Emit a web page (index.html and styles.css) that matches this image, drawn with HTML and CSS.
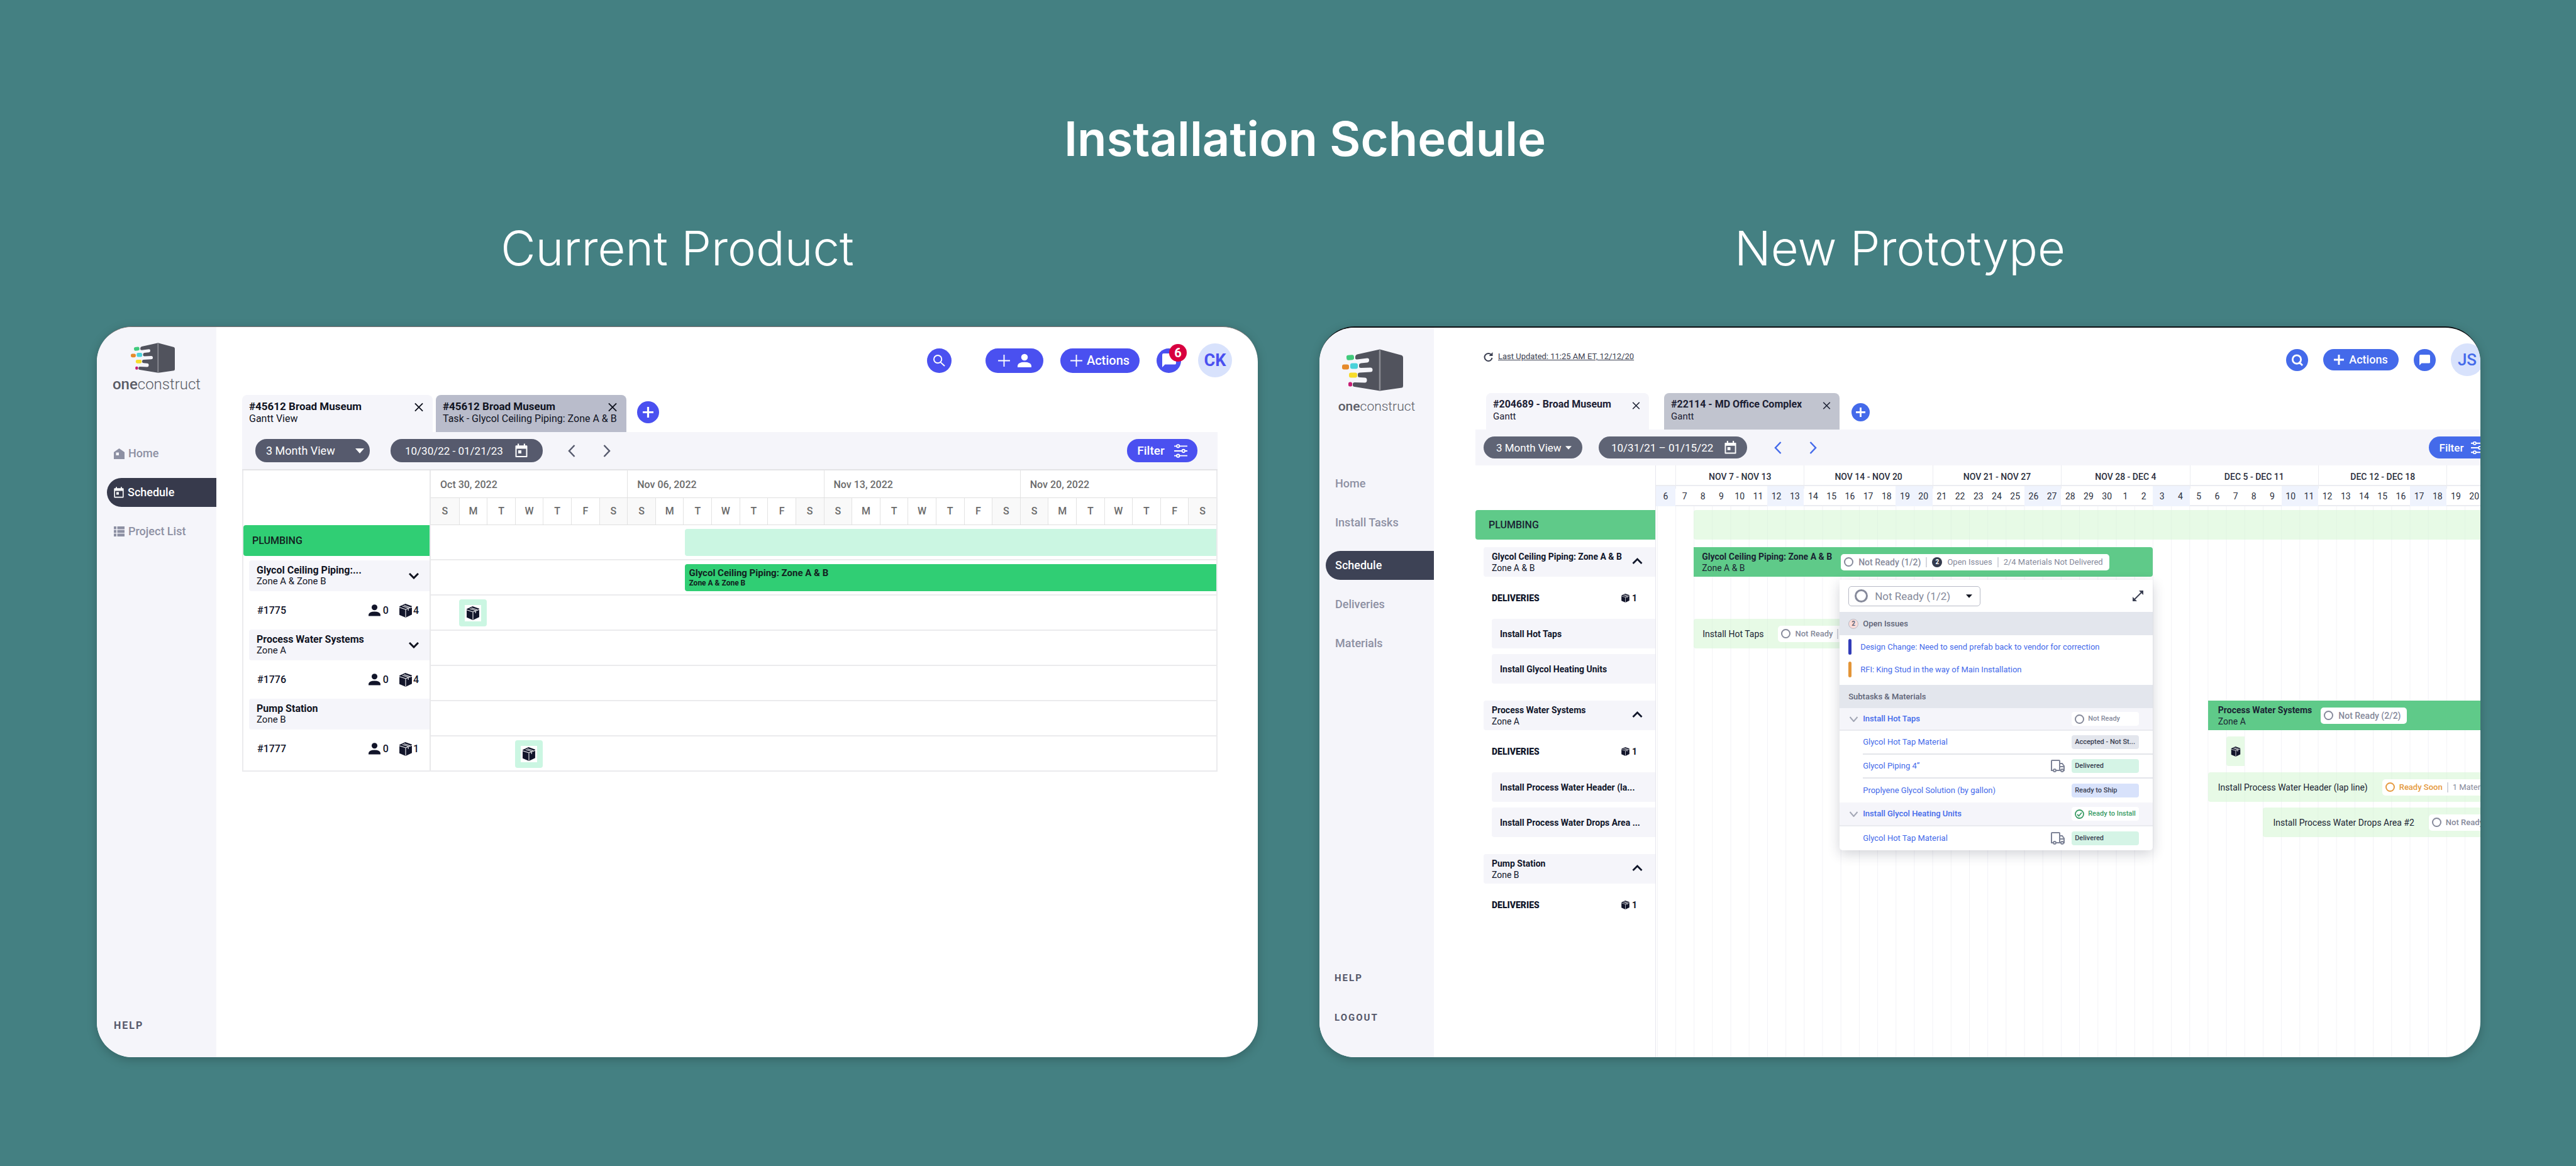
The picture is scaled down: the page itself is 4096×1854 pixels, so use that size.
FILE: index.html
```html
<!DOCTYPE html>
<html lang="en">
<head>
<meta charset="utf-8">
<title>Installation Schedule</title>
<link rel="stylesheet" href="styles.css">
</head>
<body>
<svg class="sprite" aria-hidden="true">
  <symbol id="logo" viewBox="0 0 97 66">
    <path fill="#51535d" d="M60 0 24 8Q21 9 21 12V14Q21 16 24 16L40 14Q43 14 43 17 43 20.500 40 21L30 22Q27 22.500 27 25V27Q27 29.500 30 29.500L45 29Q48.500 29 48.500 32.500 48.500 36 45 36L28 37Q25 37 25 40V42Q25 44.500 28 44.500L36 45Q39.500 45 39.500 49 39.500 53 36 53L20 52.500Q17 52.500 17 55V57Q17 59 20 59.500L60 66 95 61Q97 60.500 97 58V13Q97 10.500 95 9.500Z"/>
    <path stroke="#8b8c93" stroke-width="2.500" d="M60 1V65"/>
    <rect x="7" y="9" width="12" height="8" rx="3" fill="#41ca7c" transform="rotate(-6 13 13)"/>
    <rect x="0" y="24" width="11" height="8" rx="3" fill="#e58a2c"/>
    <rect x="13" y="22" width="12" height="9" rx="3" fill="#4bd2da"/>
    <rect x="11" y="37" width="13" height="8" rx="3" fill="#f7dc2b"/>
    <rect x="10" y="52" width="6" height="7" rx="2.500" fill="#c81c74"/>
  </symbol>
  <symbol id="box" viewBox="0 0 21 21">
    <path fill="#12152a" d="M10 0 20 3.500V16.500L10.500 21 1 17V4Z"/>
    <path fill="none" stroke="#fff" stroke-width="1" d="M1 5.500 10.500 8.500 20 5M10.500 8.500V20.500M5.500 3.500 14.500 6.500V10.500M8 2.500 17 5.500"/>
  </symbol>
  <symbol id="person" viewBox="0 0 20 20">
    <circle cx="10" cy="5" r="4.800"/><path d="M0 19.500V17Q1 12 10 12T20 17V19.500Z"/>
  </symbol>
  <symbol id="calendar" viewBox="0 0 20 22">
    <path fill="none" stroke="currentColor" stroke-width="2" d="M1.500 4H18.500V20.500H1.500Z" stroke-linejoin="round"/>
    <path fill="currentColor" d="M1 3H19V8H1ZM4 0H6.200V4H4ZM13.800 0H16V4H13.800ZM5 10.500H10V15.500H5Z"/>
  </symbol>
  <symbol id="cross" viewBox="0 0 16 16"><path fill="none" stroke="currentColor" stroke-width="2" d="M1.500 1.500 14.500 14.500M14.500 1.500 1.500 14.500"/></symbol>
  <symbol id="plus" viewBox="0 0 20 20"><path fill="none" stroke="currentColor" stroke-width="2" d="M10 0V20M0 10H20"/></symbol>
  <symbol id="plus-bold" viewBox="0 0 16 16"><path fill="none" stroke="currentColor" stroke-width="3" d="M8 0V16M0 8H16"/></symbol>
  <symbol id="search" viewBox="0 0 20 20"><path fill="none" stroke="currentColor" stroke-width="2" d="M14 7.500A6.500 6.500 0 1 1 1 7.500A6.500 6.500 0 1 1 14 7.500ZM12 12.500 19 19"/></symbol>
  <symbol id="search-bold" viewBox="0 0 20 20"><path fill="none" stroke="currentColor" stroke-width="3" d="M16.500 9A7 7 0 1 1 2.500 9A7 7 0 1 1 16.500 9ZM13 13 19 19"/></symbol>
  <symbol id="chat" viewBox="0 0 20 20"><path fill="currentColor" d="M2 0H18Q20 0 20 2V14Q20 16 18 16H4L0 20V2Q0 0 2 0Z"/></symbol>
  <symbol id="sliders" viewBox="0 0 22 22"><g fill="none" stroke="currentColor" stroke-width="2"><path d="M0 3H4M9 3H22M0 11H13M18 11H22M0 19H4M9 19H22"/><circle cx="6.500" cy="3" r="2.300"/><circle cx="15.500" cy="11" r="2.300"/><circle cx="6.500" cy="19" r="2.300"/></g></symbol>
  <symbol id="caret" viewBox="0 0 14 8"><path fill="currentColor" d="M0 0H14L7 8Z"/></symbol>
  <symbol id="prev" viewBox="0 0 12 20"><path fill="none" stroke="currentColor" stroke-width="2.500" d="M10.500 1 2 10 10.500 19"/></symbol>
  <symbol id="next" viewBox="0 0 12 20"><path fill="none" stroke="currentColor" stroke-width="2.500" d="M1.500 1 10 10 1.500 19"/></symbol>
  <symbol id="down" viewBox="0 0 16 10"><path fill="none" stroke="currentColor" stroke-width="3" d="M1 1 8 8 15 1"/></symbol>
  <symbol id="up" viewBox="0 0 16 10"><path fill="none" stroke="currentColor" stroke-width="2.800" d="M1 9 8 2 15 9"/></symbol>
  <symbol id="truck" viewBox="0 0 22 20"><g fill="none" stroke="#7e8497" stroke-width="2"><path d="M4 17H1V2Q1 1 2 1H13Q14 1 14 2V17H8M14 6H18L21 10V17H20M16 17H14M15 11H21"/><circle cx="6" cy="17" r="2"/><circle cx="18" cy="17" r="2"/></g></symbol>
</svg>

<header class="titles">
  <h1>Installation Schedule</h1>
</header>

<main class="compare">
<section class="side">
  <h2>Current Product</h2>
  <div class="app current">
    <aside class="sidebar">
      <div class="brand"><svg class="brand-mark"><use href="#logo"/></svg><span class="brand-name"><b>one</b>construct</span></div>
      <nav class="nav">
        <a href="#home"><svg width="17" height="17" viewBox="0 0 17 17"><path fill="currentColor" fill-rule="evenodd" d="M0 6 8.500 0 17 6V17H0ZM3.500 6.500V11H8V6.500Z"/></svg>Home</a>
        <a href="#schedule" class="active"><svg width="16" height="18"><use href="#calendar"/></svg>Schedule</a>
        <a href="#projects"><svg width="17" height="16" viewBox="0 0 17 16"><path fill="currentColor" d="M0 0H4V4.500H0ZM5.500 0H17V4.500H5.500ZM0 5.800H4V10.200H0ZM5.500 5.800H17V10.200H5.500ZM0 11.500H4V16H0ZM5.500 11.500H17V16H5.500Z"/></svg>Project List</a>
      </nav>
      <div class="foot"><a href="#help">HELP</a></div>
    </aside>
    <div class="work">
      <div class="topbar">
        <button class="round gap-after" aria-label="Search"><svg width="19" height="19"><use href="#search"/></svg></button>
        <button class="btn user" aria-label="Add user"><svg width="19" height="19"><use href="#plus"/></svg><svg width="22" height="23" fill="#fff"><use href="#person"/></svg></button>
        <button class="btn actions"><svg width="19" height="19"><use href="#plus"/></svg>Actions</button>
        <button class="round msg" aria-label="Messages"><svg width="22" height="22"><use href="#chat"/></svg><span class="count">6</span></button>
        <button class="avatar">CK</button>
      </div>
      <div class="content">
        <div class="tabs">
          <div class="tab"><div><strong>#45612 Broad Museum</strong><span>Gantt View</span></div><button aria-label="Close tab"><svg width="16" height="15"><use href="#cross"/></svg></button></div>
          <div class="tab alt"><div><strong>#45612 Broad Museum</strong><span>Task - Glycol Ceiling Piping: Zone A &amp; B</span></div><button aria-label="Close tab"><svg width="16" height="15"><use href="#cross"/></svg></button></div>
          <button class="add" aria-label="Add tab"><svg width="17" height="17"><use href="#plus-bold"/></svg></button>
        </div>
        <div class="toolbar">
          <label class="pill range"><select aria-label="Range"><option>3 Month View</option></select><svg width="14" height="8"><use href="#caret"/></svg></label>
          <button class="pill dates">10/30/22 - 01/21/23<svg width="20" height="23"><use href="#calendar"/></svg></button>
          <button class="step" aria-label="Previous"><svg width="12" height="20"><use href="#prev"/></svg></button>
          <button class="step" aria-label="Next"><svg width="12" height="20"><use href="#next"/></svg></button>
          <button class="btn filter">Filter<svg width="21" height="22"><use href="#sliders"/></svg></button>
        </div>
        <div class="gantt">
          <div class="labels">
            <div class="row trade">PLUMBING</div>
            <div class="row task"><div><strong>Glycol Ceiling Piping:...</strong><span>Zone A &amp; Zone B</span></div><svg width="16" height="10"><use href="#down"/></svg></div>
            <div class="row order"><strong>#1775</strong><span class="num"><svg width="19" height="19"><use href="#person"/></svg>0</span><span class="num tight"><svg width="22" height="22"><use href="#box"/></svg>4</span></div>
            <div class="row task"><div><strong>Process Water Systems</strong><span>Zone A</span></div><svg width="16" height="10"><use href="#down"/></svg></div>
            <div class="row order"><strong>#1776</strong><span class="num"><svg width="19" height="19"><use href="#person"/></svg>0</span><span class="num tight"><svg width="22" height="22"><use href="#box"/></svg>4</span></div>
            <div class="row task"><div><strong>Pump Station</strong><span>Zone B</span></div></div>
            <div class="row order"><strong>#1777</strong><span class="num"><svg width="19" height="19"><use href="#person"/></svg>0</span><span class="num tight"><svg width="22" height="22"><use href="#box"/></svg>1</span></div>
          </div>
          <div class="chart">
            <div class="weeks"><span>Oct 30, 2022</span><span>Nov 06, 2022</span><span>Nov 13, 2022</span><span>Nov 20, 2022</span></div>
            <div class="days"><i>S</i><i>M</i><i>T</i><i>W</i><i>T</i><i>F</i><i>S</i><i>S</i><i>M</i><i>T</i><i>W</i><i>T</i><i>F</i><i>S</i><i>S</i><i>M</i><i>T</i><i>W</i><i>T</i><i>F</i><i>S</i><i>S</i><i>M</i><i>T</i><i>W</i><i>T</i><i>F</i><i>S</i></div>
            <div class="line"><div class="bar pale from-10"></div></div>
            <div class="line"><div class="bar solid from-10"><strong>Glycol Ceiling Piping: Zone A &amp; B</strong><span>Zone A &amp; Zone B</span></div></div>
            <div class="line"><div class="drop at-2"><svg width="26" height="26"><use href="#box"/></svg></div></div>
            <div class="line"></div>
            <div class="line"></div>
            <div class="line"></div>
            <div class="line"><div class="drop at-4"><svg width="26" height="26"><use href="#box"/></svg></div></div>
          </div>
        </div>
      </div>
    </div>
  </div>
</section>

<section class="side">
  <h2>New Prototype</h2>
  <div class="app proto">
    <aside class="sidebar">
      <div class="brand"><svg class="brand-mark"><use href="#logo"/></svg><span class="brand-name"><b>one</b>construct</span></div>
      <nav class="nav">
        <a href="#home">Home</a>
        <a href="#install">Install Tasks</a>
        <a href="#schedule" class="active">Schedule</a>
        <a href="#deliveries">Deliveries</a>
        <a href="#materials">Materials</a>
      </nav>
      <div class="foot"><a href="#help">HELP</a><a href="#logout">LOGOUT</a></div>
    </aside>
    <div class="work">
      <div class="topbar">
        <a class="updated" href="#refresh"><svg width="15" height="15" viewBox="0 0 15 15"><path fill="none" stroke="currentColor" stroke-width="2" d="M12.500 4.500A6 6 0 1 0 13.500 9"/><path fill="currentColor" d="M14.500 0V6H8.500Z"/></svg><span>Last Updated: 11:25 AM ET, 12/12/20</span></a>
        <button class="round" aria-label="Search"><svg width="19" height="19"><use href="#search-bold"/></svg></button>
        <button class="btn actions"><svg width="16" height="16"><use href="#plus-bold"/></svg>Actions</button>
        <button class="round" aria-label="Messages"><svg width="17" height="17"><use href="#chat"/></svg></button>
        <button class="avatar">JS</button>
      </div>
      <div class="content">
        <div class="tabs">
          <div class="tab"><div><strong>#204689 - Broad Museum</strong><span>Gantt</span></div><button aria-label="Close tab"><svg width="13" height="14"><use href="#cross"/></svg></button></div>
          <div class="tab alt"><div><strong>#22114 - MD Office Complex</strong><span>Gantt</span></div><button aria-label="Close tab"><svg width="13" height="14"><use href="#cross"/></svg></button></div>
          <button class="add" aria-label="Add tab"><svg width="15" height="15"><use href="#plus-bold"/></svg></button>
        </div>
        <div class="toolbar">
          <label class="pill range"><select aria-label="Range"><option>3 Month View</option></select><svg width="10" height="6"><use href="#caret"/></svg></label>
          <button class="pill dates">10/31/21 – 01/15/22<svg width="19" height="21"><use href="#calendar"/></svg></button>
          <button class="step" aria-label="Previous"><svg width="12" height="20"><use href="#prev"/></svg></button>
          <button class="step" aria-label="Next"><svg width="12" height="20"><use href="#next"/></svg></button>
          <button class="btn filter">Filter<svg width="20" height="20"><use href="#sliders"/></svg></button>
        </div>
        <div class="gantt">
          <div class="labels">
            <div class="lane trade">PLUMBING</div>
            <div class="group">
              <div class="lane task"><div><strong>Glycol Ceiling Piping: Zone A &amp; B</strong><span>Zone A &amp; B</span></div><svg width="17" height="10"><use href="#up"/></svg></div>
              <div class="lane tall"><strong>DELIVERIES</strong><span class="num"><svg width="15" height="14"><use href="#box"/></svg>1</span></div>
              <div class="lane sub">Install Hot Taps</div>
              <div class="lane sub">Install Glycol Heating Units</div>
            </div>
            <div class="group">
              <div class="lane task"><div><strong>Process Water Systems</strong><span>Zone A</span></div><svg width="17" height="10"><use href="#up"/></svg></div>
              <div class="lane tall"><strong>DELIVERIES</strong><span class="num"><svg width="15" height="14"><use href="#box"/></svg>1</span></div>
              <div class="lane sub">Install Process Water Header (la...</div>
              <div class="lane sub">Install Process Water Drops Area ...</div>
            </div>
            <div class="group">
              <div class="lane task"><div><strong>Pump Station</strong><span>Zone B</span></div><svg width="17" height="10"><use href="#up"/></svg></div>
              <div class="lane tall"><strong>DELIVERIES</strong><span class="num"><svg width="15" height="14"><use href="#box"/></svg>1</span></div>
            </div>
          </div>
          <div class="chart">
            <div class="weeks track"><span class="w0"></span><span>NOV 7 - NOV 13</span><span>NOV 14 - NOV 20</span><span>NOV 21 - NOV 27</span><span>NOV 28 - DEC 4</span><span>DEC 5 - DEC 11</span><span>DEC 12 - DEC 18</span><span class="w3"></span></div>
            <div class="days track"><i>6</i><i>7</i><i>8</i><i>9</i><i>10</i><i>11</i><i>12</i><i>13</i><i>14</i><i>15</i><i>16</i><i>17</i><i>18</i><i>19</i><i>20</i><i>21</i><i>22</i><i>23</i><i>24</i><i>25</i><i>26</i><i>27</i><i>28</i><i>29</i><i>30</i><i>1</i><i>2</i><i>3</i><i>4</i><i>5</i><i>6</i><i>7</i><i>8</i><i>9</i><i>10</i><i>11</i><i>12</i><i>13</i><i>14</i><i>15</i><i>16</i><i>17</i><i>18</i><i>19</i><i>20</i></div>
            <div class="lanes">
              <div class="lane track"><div class="bar pale all"></div></div>
              <div class="group">
                <div class="lane track"><div class="bar solid glycol">
                  <div class="name"><strong>Glycol Ceiling Piping: Zone A &amp; B</strong><span>Zone A &amp; B</span></div>
                  <div class="chip"><span class="ring"></span><b class="big">Not Ready (1/2)</b><hr><span class="two">2</span>Open Issues<hr>2/4 Materials Not Delivered</div>
                  <div class="popover">
                    <div class="pop-head"><label class="status"><span class="ring"></span><select aria-label="Status"><option>Not Ready (1/2)</option></select><svg width="10" height="6"><use href="#caret"/></svg></label><button aria-label="Expand"><svg width="17" height="17" viewBox="0 0 17 17"><path stroke="#3a3f52" stroke-width="1.800" d="M3 14 14 3"/><path fill="#3a3f52" d="M17 0V7L10 0ZM0 17V10L7 17Z"/></svg></button></div>
                    <h3><span class="two">2</span>Open Issues</h3>
                    <ul class="issues">
                      <li class="blue"><a href="#i1">Design Change: Need to send prefab back to vendor for correction</a></li>
                      <li class="orange"><a href="#i2">RFI: King Stud in the way of Main Installation</a></li>
                    </ul>
                    <h3>Subtasks &amp; Materials</h3>
                    <ul class="parts">
                      <li class="parent"><svg width="13" height="9" viewBox="0 0 13 9"><path fill="none" stroke="#a3a7b5" stroke-width="2" d="M.500 1 6.500 8 12.500 1"/></svg><a href="#p1"><b>Install Hot Taps</b></a><span class="state plain"><span class="ring"></span>Not Ready</span></li>
                      <li><a href="#p2">Glycol Hot Tap Material</a><span class="state grey">Accepted - Not St...</span></li>
                      <li><a href="#p3">Glycol Piping 4”</a><svg width="22" height="20"><use href="#truck"/></svg><span class="state mint">Delivered</span></li>
                      <li class="last"><a href="#p4">Proplyene Glycol Solution (by gallon)</a><span class="state sky">Ready to Ship</span></li>
                      <li class="parent"><svg width="13" height="9" viewBox="0 0 13 9"><path fill="none" stroke="#a3a7b5" stroke-width="2" d="M.500 1 6.500 8 12.500 1"/></svg><a href="#p5"><b>Install Glycol Heating Units</b></a><span class="state plain ok"><svg width="15" height="15" viewBox="0 0 15 15"><g fill="none" stroke="#3a9c66" stroke-width="1.800"><circle cx="7.500" cy="7.500" r="6.500"/><path d="M4 8 6.500 10.500 11 5"/></g></svg>Ready to Install</span></li>
                      <li class="last"><a href="#p6">Glycol Hot Tap Material</a><svg width="22" height="20"><use href="#truck"/></svg><span class="state mint">Delivered</span></li>
                    </ul>
                  </div>
                </div></div>
                <div class="lane tall"></div>
                <div class="lane track"><div class="bar pale taps">Install Hot Taps<div class="chip"><span class="ring"></span><b>Not Ready</b><hr>2 Materials</div></div></div>
                <div class="lane sub"></div>
              </div>
              <div class="group">
                <div class="lane track"><div class="bar solid process">
                  <div class="name"><strong>Process Water Systems</strong><span>Zone A</span></div>
                  <div class="chip"><span class="ring"></span><b class="big">Not Ready (2/2)</b></div>
                </div></div>
                <div class="lane tall track"><div class="bar pale parcel"><svg width="16" height="16"><use href="#box"/></svg></div></div>
                <div class="lane track"><div class="bar pale header-task">Install Process Water Header (lap line)<div class="chip soon"><span class="ring"></span><b>Ready Soon</b><hr>1 Materials</div></div></div>
                <div class="lane sub track"><div class="bar pale drops">Install Process Water Drops Area #2<div class="chip"><span class="ring"></span><b>Not Ready</b></div></div></div>
              </div>
            </div>
          </div>
        </div>
      </div>
    </div>
  </div>
</section>
</main>
</body>
</html>
```
FILE: styles.css
```css
* { box-sizing: border-box; }
body {
  margin: 0;
  min-height: 100vh;
  display: flex;
  flex-direction: column;
  background: #448082;
  color: #10131f;
  font: 400 16px/20px Roboto, "Liberation Sans", sans-serif;
}
button, select { font: inherit; color: inherit; border: 0; background: none; padding: 0; margin: 0; }
a { color: inherit; text-decoration: none; }
svg { flex: none; display: block; }
i { font-style: normal; }
h1, h2, h3, ul { margin: 0; padding: 0; }
ul { list-style: none; }
hr { align-self: stretch; width: 2px; margin: 5px 0; border: 0; background: #d5d7de; }
.sprite { position: absolute; width: 0; height: 0; }

.titles { padding: 174px 0 82px 54px; }
h1, h2 { color: #fff; text-align: center; font-family: Inter, "Open Sans", sans-serif; }
h1 { font-size: 76px; line-height: 92px; font-weight: 600; }
h2 { font-size: 76px; line-height: 92px; font-weight: 300; margin-bottom: 79px; }
.compare { flex: 1; display: grid; grid-template-columns: 1fr 1fr; gap: 98px; padding: 0 152px 173px 154px; }
.side { display: flex; flex-direction: column; min-width: 0; }

/* App frame */
.app {
  flex: 1;
  display: flex;
  overflow: hidden;
  border-radius: 56px;
  background: #fff;
  box-shadow: 0 4px 16px rgba(0, 0, 0, .22);
}
.current { border-top: 1px solid #7c6f6f; --accent: #4a50f0; }
.proto { border-top: 2px solid #0c0f12; --accent: #446aea; }
.sidebar { flex: none; display: flex; flex-direction: column; background: #f5f5fa; }
.current .sidebar { width: 190px; padding-top: 25px; }
.proto .sidebar { width: 182px; padding-top: 34px; }
.brand { display: flex; flex-direction: column; align-items: center; color: #5a5c66; }
.brand-name { font-weight: 300; }
.brand-name b { font-weight: 500; }
.current .brand-mark { width: 70px; height: 48px; margin-right: 13px; }
.current .brand-name { font-size: 24px; line-height: 28px; margin-top: 4px; }
.proto .brand-mark { width: 97px; height: 67px; margin-right: 14px; }
.proto .brand-name { font-size: 21px; line-height: 24px; margin-top: 12px; }
.nav { display: flex; flex-direction: column; gap: 16px; font-size: 18px; color: #8d90a3; font-weight: 500; }
.nav a { display: flex; align-items: center; gap: 6px; height: 46px; }
.nav .active { background: #373a4c; color: #fff; border-radius: 23px 0 0 23px; }
.current .nav { margin: 73px 0 0 16px; }
.current .nav a { padding-left: 11px; }
.proto .nav { margin: 88px 0 0 10px; }
.proto .nav a { padding-left: 15px; }
.proto .nav .active { margin-top: 6px; background: #3d4255; }
.foot { margin-top: auto; display: flex; flex-direction: column; gap: 43px; color: #55586a; font-weight: 700; letter-spacing: 2px; }
.current .foot { padding: 0 0 40px 27px; }
.proto .foot { padding: 0 0 53px 24px; font-size: 15px; }
.work { flex: 1; min-width: 0; display: flex; flex-direction: column; }
.content { flex: 1; display: flex; flex-direction: column; }
.current .content { padding: 0 64px 0 41px; }
.proto .content { padding-left: 66px; }

/* The prototype canvas runs past the right edge of its frame */
.proto .work { margin-right: -34px; }

/* Top bar */
.topbar { display: flex; align-items: center; justify-content: flex-end; }
.current .topbar { gap: 27px; padding: 26px 41px 28px 0; }
.proto .topbar { gap: 24px; padding: 25px 29px 27px 79px; }
.round, .btn { display: flex; align-items: center; justify-content: center; background: var(--accent); color: #fff; font-weight: 500; }
.round { border-radius: 50%; }
.btn { border-radius: 20px; }
.avatar { border-radius: 50%; background: #d8e2fc; color: var(--accent); font-weight: 700; }
.current .round { width: 39px; height: 39px; }
.current .gap-after { margin-right: 27px; }
.current .topbar .btn { height: 39px; }
.current .user { width: 92px; gap: 12px; }
.current .actions { width: 126px; gap: 7px; font-size: 20px; }
.current .avatar { width: 54px; height: 54px; font-size: 27px; }
.proto .round { width: 35px; height: 35px; }
.proto .actions { width: 120px; height: 34px; gap: 8px; font-size: 18px; }
.proto .avatar { width: 52px; height: 52px; font-size: 26px; font-weight: 500; }
.msg { position: relative; }
.count { position: absolute; right: -9px; top: -7px; width: 28px; height: 28px; border-radius: 50%; background: #d8003f; font-size: 20px; line-height: 28px; font-weight: 700; }
.updated { align-self: flex-start; margin-right: auto; display: flex; align-items: center; gap: 8px; height: 42px; font-size: 13px; color: #3a3e50; }
.updated span { text-decoration: underline; }

/* Tabs */
.tabs { display: flex; align-items: flex-start; }
.tab { display: flex; justify-content: space-between; padding: 8px 14px 0 11px; border-radius: 8px 8px 0 0; background: #f5f5fa; white-space: nowrap; }
.tab div { width: 0; }
.tab strong, .tab span { display: block; }
.tab.alt { background: #b9bccb; }
.tab button { height: 15px; margin-top: 4px; }
.add { display: flex; align-items: center; justify-content: center; border-radius: 50%; background: var(--accent); color: #fff; }
.current .tab { width: 303px; height: 59px; margin-right: 5px; }
.current .tab strong { font-size: 17px; }
.current .add { width: 35px; height: 35px; margin: 10px 0 0 12px; }
.proto .tabs { padding-left: 17px; }
.proto .tab { width: 259px; height: 58px; margin-right: 24px; color: #1c2033; }
.proto .tab span { font-size: 15px; line-height: 18px; }
.proto .tab.alt { width: 279px; background: #c1c4cf; margin-right: 19px; }
.proto .add { width: 29px; height: 29px; margin-top: 16px; }

/* Toolbar */
.toolbar { display: flex; align-items: center; background: #f5f5fa; }
.current .toolbar { height: 61px; padding: 0 32px 0 21px; border-bottom: 2px solid #e3e3e6; }
.proto .toolbar { height: 57px; padding: 0 12px 0 13px; }
.pill { display: flex; align-items: center; border-radius: 18px; background: #565a6d; color: #fff; }
.pill select { appearance: none; flex: 1; min-width: 0; }
.current .pill { height: 37px; margin-right: 33px; font-size: 17px; }
.current .range { width: 182px; padding: 0 9px 0 17px; font-size: 18px; }
.current .dates { width: 242px; padding: 0 24px 0 23px; justify-content: space-between; }
.proto .pill { height: 35px; margin-right: 26px; background: #5f6475; font-size: 17px; }
.proto .range { width: 157px; padding: 0 17px 0 20px; }
.proto .dates { width: 236px; padding: 0 17px 0 20px; justify-content: space-between; }
.step { width: 12px; color: #565a6d; }
.current .step { margin: 0 37px 0 7px; }
.current .step + .step { margin-left: 7px; }
.proto .step { color: var(--accent); margin: 0 44px 0 17px; }
.proto .step + .step { margin-left: 0; }
.filter { margin-left: auto; border-radius: 18px; }
.current .filter { width: 112px; height: 37px; gap: 15px; font-size: 19px; }
.proto .filter { width: 104px; height: 35px; gap: 12px; font-size: 17px; }

.gantt { display: flex; }
.chart { flex: 1; min-width: 0; }
.weeks, .days { display: grid; }
.num { display: flex; align-items: center; font-weight: 500; }

/* Current product chart */
.current .gantt { border: 2px solid #ebebed; border-top: 0; }
.current .labels { flex: none; width: 298px; padding-top: 87px; border-right: 2px solid #e8e8ea; }
.row { height: 49px; margin-bottom: 7px; display: flex; align-items: center; }
.current .trade { background: #30ce74; padding-left: 14px; font-weight: 500; color: #12221f; border-radius: 4px 0 0 4px; }
.row.task { margin: 0 0 6px 9px; padding: 0 17px 0 12px; justify-content: space-between; background: #f5f5fa; border-radius: 4px 0 0 4px; }
.row.order { margin-bottom: 6px; }
.task strong, .task span { display: block; }
.task strong { font-weight: 700; line-height: 18px; }
.row.task span { font-size: 15px; line-height: 17px; }
.order { padding: 0 17px 0 22px; color: #12152a; }
.order strong { margin-right: auto; font-weight: 500; }
.order .num { gap: 4px; fill: #12152a; }
.order .tight { gap: 1px; margin-left: 16px; }
.current .weeks { grid-template-columns: repeat(4, 1fr); height: 44px; border-bottom: 1px solid #e0e0e0; color: #6b6b6b; }
.current .weeks span { padding: 13px 0 0 15px; font-weight: 500; }
.current .weeks span + span, .current .days i + i { border-left: 1px solid #e3e3e3; }
.current .days { grid-template-columns: repeat(28, 1fr); height: 43px; border-bottom: 1px solid #e0e0e0; color: #6b6b6b; font-weight: 500; text-align: center; line-height: 42px; }
.current .days i:nth-child(7n), .current .days i:nth-child(7n+1) { background: #f9f9f9; }
.line { display: grid; grid-template-columns: repeat(28, 1fr); height: 56px; padding: 6px 0 5px; border-bottom: 2px solid #ebebed; }
.line:last-child { border-bottom: 0; height: 54px; padding-bottom: 4px; }
.from-10 { grid-column: 10 / -1; margin-left: 3px; border-radius: 4px 0 0 4px; }
.current .pale { background: #cbf6e2; }
.current .solid { background: #30ce74; padding: 5px 0 0 6px; color: #12221f; }
.current .solid strong, .current .solid span { display: block; font-weight: 700; }
.current .solid strong { font-size: 15px; line-height: 18px; }
.current .solid span { font-size: 12px; line-height: 14px; }
.drop { display: flex; align-items: center; justify-content: center; border-radius: 4px; background: #cbf6e2; }
.drop svg { padding: 2px; background: #fff; }
.at-2 { grid-column: 2; }
.at-4 { grid-column: 4; }

/* Prototype chart */
.proto .gantt { flex: 1; }
.proto .labels { flex: none; width: 287px; padding-top: 71px; border-right: 1px solid #e6e6ee; color: #10162a; font-size: 14px; font-weight: 700; }
.lane { height: 47px; display: flex; align-items: center; }
.lane.track { align-items: stretch; }
.group { margin-top: 27px; }
.trade + .group, .track + .group { margin-top: 12px; }
.lane.tall { height: 67px; }
.lane.tall.track { padding: 10px 0; }
.lane:not(.tall):nth-child(4) { margin-top: 9px; }
.proto .trade { background: #5fca89; padding-left: 21px; border-radius: 4px 0 0 4px; font-size: 16px; font-weight: 500; color: #1a2433; }
.proto .labels .task { margin-left: 13px; padding: 0 20px 0 13px; justify-content: space-between; background: #f5f5fa; border-radius: 4px 0 0 4px; }
.proto .labels .task svg { margin-bottom: 4px; }
.proto .task span { font-weight: 400; line-height: 18px; }
.proto .labels .tall { padding: 0 29px 0 26px; justify-content: space-between; }
.proto .num { gap: 3px; font-weight: 700; }
.proto .labels .sub { margin-left: 26px; padding-left: 13px; background: #f5f5fa; border-radius: 4px 0 0 4px; white-space: nowrap; }
.proto .chart { display: flex; flex-direction: column; color: #2b2f3d; }
.track { display: grid; grid-template-columns: 31px repeat(45, 1fr); }
.proto .weeks { height: 33px; border-bottom: 2px solid #ebecf1; }
.proto .weeks span { grid-column: span 7; border-left: 1px solid #ebecf1; text-align: center; font-size: 14px; font-weight: 500; line-height: 37px; }
.proto .weeks .w0 { grid-column: span 1; border-left: 0; }
.proto .weeks .w3 { grid-column: span 3; }
.proto .days { height: 32px; border-bottom: 2px solid #ebecf1; font-size: 14px; line-height: 32px; text-align: center; }
.proto .days i:nth-child(7n), .proto .days i:nth-child(7n+1) { background: #eff3fd; }
.lanes {
  flex: 1;
  padding-top: 6px;
  background: linear-gradient(to right, #f2f2f6 1px, transparent 1px) 31px 0 / calc((100% - 31px) / 45) 100%;
}
.lanes .bar { display: flex; align-items: center; font-size: 14px; white-space: nowrap; color: #1a2433; }
.proto .pale { background: rgba(208, 245, 205, .5); border-radius: 4px 0 0 4px; }
.proto .solid { background: #5fca89; }
.all { grid-column: 3 / -1; }
.glycol { grid-column: 3 / 28; position: relative; z-index: 2; padding-left: 13px; border-radius: 0 4px 4px 0; }
.taps { grid-column: 3 / 28; padding-left: 14px; }
.process { grid-column: 31 / -1; padding-left: 16px; }
.parcel { grid-column: 32; justify-content: center; }
.header-task { grid-column: 31 / -1; padding-left: 16px; }
.drops { grid-column: 34 / -1; padding-left: 16px; }
.name strong, .name span { display: block; line-height: 18px; }
.chip { display: flex; align-items: center; gap: 8px; height: 26px; margin-left: 14px; padding: 0 10px 0 5px; border-radius: 5px; background: #fff; color: #868a9b; font-size: 13px; }
.pale .chip { gap: 7px; margin-left: 23px; }
.chip b { font-weight: 500; }
.chip .big { font-size: 14px; }
.ring { flex: none; width: 15px; height: 15px; border: 2px solid currentColor; border-radius: 50%; }
.soon b, .soon .ring { color: #e59a41; }
.two { width: 16px; height: 16px; border-radius: 50%; background: #343a4d; color: #fff; font-size: 10px; line-height: 16px; font-weight: 700; text-align: center; }

/* Task popover */
.popover { position: absolute; top: 52px; right: 0; width: 498px; background: #fff; border-radius: 0 0 5px 5px; box-shadow: 0 6px 20px rgba(30, 35, 60, .2); font-size: 13px; color: #868a9b; }
.pop-head { display: flex; align-items: center; justify-content: space-between; height: 51px; padding: 0 15px 0 14px; }
.status { display: flex; align-items: center; width: 210px; height: 32px; padding: 0 12px 0 9px; border: 1px solid #b7bac6; border-radius: 5px; font-size: 17px; color: #868a9b; }
.status .ring { width: 21px; height: 21px; border-width: 3px; }
.status select { appearance: none; flex: 1; padding-left: 11px; }
.status svg { color: #10131f; }
h3 { display: flex; align-items: center; gap: 7px; height: 37px; padding-left: 14px; background: #e3e6ed; color: #5e6477; font-size: 13px; font-weight: 500; }
h3 .two { border: 1px solid #b9bbc6; background: #fadcd9; color: #5e6477; line-height: 14px; }
.popover a { color: #446aea; }
.issues { padding: 6px 14px 12px; display: grid; gap: 11px; }
.issues li { height: 25px; display: flex; align-items: center; gap: 14px; }
.issues li::before { content: ""; width: 5px; height: 25px; border-radius: 3px; background: #323cb8; }
.issues .orange::before { background: #e39537; }
.parts li { display: flex; align-items: center; height: 38px; margin-left: 37px; padding-right: 22px; border-bottom: 2px solid #e3e5ea; }
.parts li:first-child { height: 36px; }
.parts .parent { margin-left: 0; padding-left: 16px; gap: 8px; background: #f5f5fa; border-color: #e9eaef; }
.parts .last { border: 0; }
.parts a { margin-right: auto; }
.parts b { font-weight: 500; }
.state { display: flex; align-items: center; gap: 6px; width: 107px; height: 22px; margin-left: 11px; padding: 0 5px; border-radius: 4px; font-size: 11px; font-weight: 500; color: #3a3f52; white-space: nowrap; }
.plain { background: #fff; color: #868a9b; }
.ok { color: #3a9c66; }
.grey { background: #e3e6ed; }
.mint { background: #d5f4e6; }
.sky { background: #d8e2fb; }
```
